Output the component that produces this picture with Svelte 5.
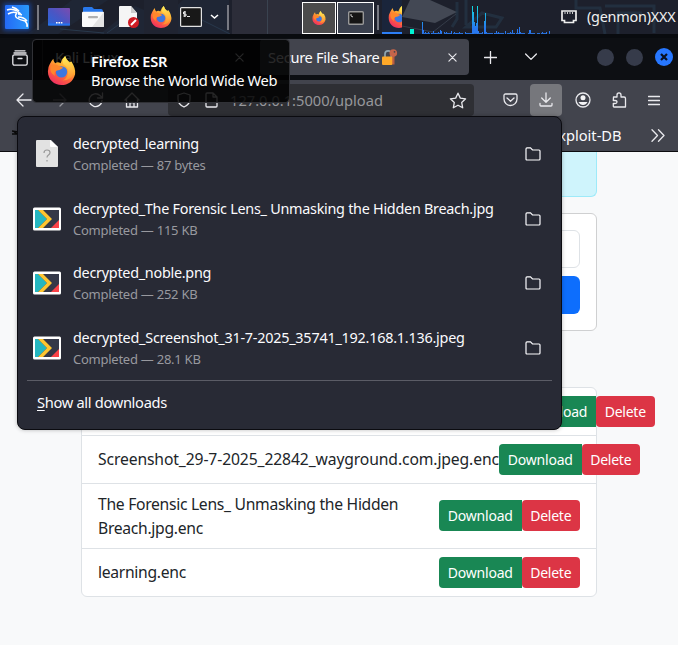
<script>
  const downloads = [
    { name: 'decrypted_learning', size: '87 bytes', kind: 'unknown' },
    { name: 'decrypted_The Forensic Lens_ Unmasking the Hidden Breach.jpg', size: '115 KB', kind: 'image' },
    { name: 'decrypted_noble.png', size: '252 KB', kind: 'image' },
    { name: 'decrypted_Screenshot_31-7-2025_35741_192.168.1.136.jpeg', size: '28.1 KB', kind: 'image' }
  ];
  const files = [
    { name: '', height: 48, cls: 'covered' },
    { name: 'Screenshot_29-7-2025_22842_wayground.com.jpeg.enc', height: 48, cls: 'wide' },
    { name: 'The Forensic Lens_ Unmasking the Hidden Breach.jpg.enc', height: 65, cls: 'wrap' },
    { name: 'learning.enc', height: 47, cls: '' }
  ];
  // CPU graph samples: x offset and bar height
  const bars = [[20,12],[21,4],[23,2],[26,2],[29,1],[31,3],[33,1],[36,2],[38,4],[39,3],[42,2],[44,2],[46,1],[49,3],[52,2],[54,1],[57,2],[60,1],[63,2],[66,1],[70,28],[71,22],[72,12],[73,8],[74,11],[75,28],[76,3],[80,2],[82,13],[83,21],[84,2],[87,1],[92,1],[94,3],[96,2],[99,1],[103,3],[105,1],[108,2],[110,4],[112,1],[115,5],[117,7],[118,2],[121,1],[127,4],[128,4],[131,1],[135,1],[140,2],[144,2],[147,3]];
</script>

{#snippet firefox(size)}
  <svg width={size} height={size} viewBox="0 0 32 32">
    <defs>
      <linearGradient id="fxo" x1=".8" y1=".05" x2=".25" y2="1">
        <stop offset="0" stop-color="#ffe850" /><stop offset=".35" stop-color="#ffac30" />
        <stop offset=".62" stop-color="#ff653b" /><stop offset="1" stop-color="#ee2b65" />
      </linearGradient>
      <linearGradient id="fxy" x1="0" y1="0" x2="0" y2="1">
        <stop offset="0" stop-color="#fff15a" /><stop offset="1" stop-color="#ff8b2e" />
      </linearGradient>
    </defs>
    <path d="M3 9 Q5 5 7 3 Q7 6 9 8 Q12 6 15 8 Q16 3 20 0 Q21 4 25 7 L27 6 Q32 14 31 20 C29 28 23 32 16 32 C8 32 1 26 1 17 Q1 12 3 9Z" fill="url(#fxo)" />
    <circle cx="16" cy="17.500" r="6.300" fill="#3d77df" />
    <path d="M4 11 Q8 8 13 11 L18 13 Q14 16 11 16 Q7 18 9 22 Q2 18 4 11Z" fill="#ff872c" />
    <path d="M20 0 Q16 5 18 9 Q25 13 23 20 Q22 25 17 27 Q28 27 29 18 Q29 12 25 8 Q21 5 20 0Z" fill="url(#fxy)" />
  </svg>
{/snippet}

{#snippet cross()}
  <svg width="9" height="9" viewBox="0 0 10 10" class="line"><path d="M1 1l8 8M9 1l-8 8" /></svg>
{/snippet}

<div class="screen">
  <header class="panel">
    <svg class="wallpaper" width="678" height="34" viewBox="0 0 678 34">
      <path d="M28 34L72 0h36L58 34M100 34L135 6l28 12 20-18h46v34" fill="#222c3d" opacity=".5" />
      <path d="M60 29l44 4M182 10l48 24M107 33L132 15" stroke="#28394c" fill="none" />
      <path d="M402 17l8-17h20l27 12-22 11z" fill="#434854" /><path d="M402 26l31 6 23-18" stroke="#353c49" fill="none" />
      <path d="M457 2v17l-5 8M466 0v25M482 13l20 5-6 9h-30zM576 0v8h24l5 26M605 6h49v27M618 34V13h24" fill="none" stroke="#2b4256" stroke-width="3" opacity=".45" />
    </svg>
    <div class="kali">
      <svg width="24" height="24" viewBox="0 0 24 24" fill="none" stroke="#fff">
        <path d="M2 5Q7 3 12 6M3 9Q8 6 12 8M7 2Q11 3 14 6M12 8Q9 11 12 13T20 16Q23 19 22 22M13 12Q19 12 22 16" stroke-width="1.5" />
        <path d="M12 6Q15 7 17 10Q14 10 13 9" fill="#fff" />
      </svg>
    </div>
    <i class="divider"></i>
    <svg class="desk" width="22" height="18" viewBox="0 0 22 18">
      <defs><linearGradient id="dk" x1="0" y1="1" x2="1" y2="0"><stop stop-color="#2866d8" /><stop offset=".5" stop-color="#4a56c4" /><stop offset="1" stop-color="#7d4bae" /></linearGradient></defs>
      <rect width="22" height="17.500" rx="1" fill="url(#dk)" /><path d="M0 16.500h22" stroke="#2674ee" stroke-width="2" /><path d="M8 14.800h7" stroke="#fff" stroke-width="1.500" stroke-dasharray="1.600 .8" />
    </svg>
    <svg class="folder" width="22" height="20" viewBox="0 0 22 20">
      <path d="M1 1Q1 0 3 0h7l2 2h7q2 0 2 3H1z" fill="#2878ec" /><rect y="4.700" width="22" height="15.300" rx="1" fill="#fafafa" /><path d="M22 5v14q0 1-1 1H10z" fill="#e4e4e4" /><rect x="6" y="9" width="10" height="2.300" rx="1" fill="#b0b0b0" />
    </svg>
    <svg class="doc" width="20" height="22" viewBox="0 0 20 22">
      <path d="M0 1q0-1 1-1h11l6 7v14H0z" fill="#f5f5f5" /><path d="M12 0l6 7h-6z" fill="#ccc" /><circle cx="14.500" cy="16.500" r="5.500" fill="#cf1c24" /><path d="M12 19l5-5" stroke="#fff" stroke-width="2" />
    </svg>
    <div class="fx-launch">{@render firefox(22)}</div>
    <svg class="term" width="22" height="20" viewBox="0 0 22 20">
      <rect x=".6" y=".6" width="20.800" height="18.800" rx="1" fill="#181818" stroke="#e2e2e2" stroke-width="1.200" /><path d="M6 5H3.500v2H6v2H3.300M4.800 4v6M7 9.500h3" fill="none" stroke="#fff" stroke-width=".9" />
    </svg>
    <svg class="caret" width="9" height="6" viewBox="0 0 9 6"><path d="M1 1l3.500 3L8 1" fill="none" stroke="#fff" stroke-width="1.600" /></svg>
    <i class="divider second"></i>
    <div class="workspaces"><i></i><i></i></div>
    <div class="task active">{@render firefox(14)}</div>
    <div class="task">
      <svg width="16" height="14" viewBox="0 0 16 14"><rect x=".7" y=".7" width="14.600" height="12.600" rx="1" fill="#151515" stroke="#999" stroke-width="1.400" /><path d="M3 3v2l2 1" stroke="#ccc" fill="none" /></svg>
    </div>
    <i class="divider third"></i>
    <div class="half">{@render firefox(22)}</div>
    <svg class="graph" width="150" height="34" viewBox="0 0 150 34">
      <defs><linearGradient id="cpu" gradientUnits="userSpaceOnUse" x1="0" y1="34" x2="0" y2="6"><stop offset=".2" stop-color="#2878f0" /><stop offset="1" stop-color="#12dbe0" /></linearGradient></defs>
      <rect x="8" y="29" width="4" height="5" fill="#00f5d4" />
      {#each bars as [x, h]}<rect {x} y={34 - h} width="1" height={h} fill="url(#cpu)" />{/each}
      <path d="M21 33.500h127" stroke="#286fd7" stroke-dasharray="7 2 3 1 5 3" />
    </svg>
    <svg class="net" width="16" height="14" viewBox="0 0 16 14"><path d="M1 1h14v9.500h-2.500V12.500h-9v-2H1z" fill="none" stroke="#eee" stroke-width="1.700" /><path d="M4 2v2M6.500 2v2M9 2v2M11.500 2v2" stroke="#ccc" /></svg>
    <span class="genmon">(genmon)XXX</span>
  </header>

  <div class="tabs">
    <svg class="view line" width="16" height="16" viewBox="0 0 16 16"><path d="M3 .8h10M2 3h12" /><rect x=".8" y="4.800" width="14.400" height="10.400" rx="1.600" /><path d="M6 8.500h4" /></svg>
    <div class="tab idle"><span>Kali Linux</span>{@render cross()}</div>
    <div class="tab current"><span class="title">Secure File Share</span>
      <svg class="lock" width="16" height="17" viewBox="0 0 16 17"><path d="M3 9V5a3.200 3.200 0 0 1 6.400 0v4" fill="none" stroke="#8fa5b0" stroke-width="1.700" /><path d="M10 6h2.500v9.500H10z" fill="#b85c43" /><rect x="0" y="7.500" width="10.300" height="8.500" rx="1" fill="#ffa928" /><circle cx="11.300" cy="4" r="3.800" fill="#c5654a" /><circle cx="12.500" cy="2.800" r=".9" fill="#44464e" /></svg>
      {@render cross()}
    </div>
    <svg class="plus line" width="13" height="13" viewBox="0 0 13 13"><path d="M6.500 .5v12M.5 6.500h12" /></svg>
    <svg class="all line" width="12" height="8" viewBox="0 0 12 8"><path d="M.6 1L6 6.400 11.400 1" /></svg>
    <div class="wm"><i></i><i></i><i class="close"><svg width="8" height="8" viewBox="0 0 8 8"><path d="M1 1l6 6M7 1L1 7" stroke="#0a1020" stroke-width="2.200" /></svg></i></div>
  </div>

  <div class="toolbar">
    <svg class="back line" width="16" height="14" viewBox="0 0 16 14"><path d="M7 1L1 7l6 6M1 7h14" /></svg>
    <svg class="fwd line" width="14" height="14" viewBox="0 0 14 14"><path d="M7 1l6 6-6 6M13 7H0" /></svg>
    <svg class="reload line" width="16" height="16" viewBox="0 0 16 16"><path d="M14 8.500A6.400 6.400 0 1 1 12 3.500l2.500 2.500M14.500 1v5h-5" /></svg>
    <svg class="home line" width="16" height="16" viewBox="0 0 16 16"><path d="M1 8l7-7 7 7M2.500 7v8h11V7M6 15v-4.500h4V15" /></svg>
    <div class="url">
      <svg class="line" width="16" height="16" viewBox="0 0 16 16"><path d="M8 1l6 2v4c0 4-2.500 6.500-6 8-3.500-1.500-6-4-6-8V3z" /></svg>
      <svg class="line page-ic" width="14" height="16" viewBox="0 0 14 16"><path d="M2 1h6l4 4v9q0 1-1 1H2q-1 0-1-1V2q0-1 1-1M8 1v4h4" /></svg>
      <span class="address">127.0.0.1:5000/upload</span>
      <svg class="line star" width="18" height="17" viewBox="0 0 18 17"><path d="M9 1.200l2.300 4.900 5.300.7-3.900 3.700 1 5.300L9 13.200l-4.700 2.600 1-5.300L1.400 6.800l5.300-.7z" /></svg>
    </div>
    <svg class="pocket line" width="15" height="14" viewBox="0 0 15 14"><path d="M2.500 1h10q1.500 0 1.500 1.500V6a6.500 6.500 0 0 1-13 0V2.500Q1 1 2.500 1M4 5l3.500 3.200L11 5" /></svg>
    <div class="dl"><svg class="line" width="14" height="16" viewBox="0 0 14 16"><path d="M7 1v9M2.700 6L7 10.300 11.300 6M1 11.500V13q0 1 1 1h10q1 0 1-1v-1.500" /></svg></div>
    <svg class="account line" width="16" height="16" viewBox="0 0 16 16"><circle cx="8" cy="8" r="7" /><circle cx="8" cy="5.800" r="2.500" fill="#f4f4f6" stroke="none" /><path d="M3.500 10h9Q11 13 8 13t-4.500-3" fill="#f4f4f6" stroke="none" /></svg>
    <svg class="ext line" width="15" height="16" viewBox="0 0 15 16"><path d="M1.500 5H5V3Q5 .8 7 .8T9 3v2h3q1.500 0 1.500 1.500V15H2q-.7 0-.7-1v-2.500H3q2 0 2-1.500T3 8.500H1.300z" /></svg>
    <svg class="menu line" width="12" height="11" viewBox="0 0 12 11"><path d="M.5 1.500h11M.5 5.500h11M.5 9.500h11" /></svg>
  </div>

  <div class="bookmarks">
    <svg class="kali-mark" width="8" height="8" viewBox="0 0 8 8"><path d="M0 2l6 1 2 1M0 5h7M2 3l5 3" stroke="#0a0a0a" stroke-width="1.400" fill="none" /></svg>
    <span>Exploit-DB</span>
    <svg class="line more" width="14" height="13" viewBox="0 0 14 13"><path d="M1 .8l5.500 5.700L1 12.200M7.500 .8L13 6.500l-5.500 5.700" /></svg>
  </div>

  <main>
    <div class="alert"></div>
    <div class="card"><div class="input"></div><div class="submit"></div></div>
    <div class="list">
      {#each files as f}
        <div class="file {f.cls}" style="height:{f.height}px">
          <span class="fname">{f.name}</span>
          <div class="btns"><button class="get">Download</button><button class="del">Delete</button></div>
        </div>
      {/each}
    </div>
  </main>

  <section class="popup">
    {#each downloads as d}
      <div class="item">
        <div class="thumb">
          {#if d.kind === 'unknown'}
            <svg width="22" height="28" viewBox="0 0 22 28"><path d="M0 1q0-1 1-1h14l7 7v19q0 1-1 1H1q-1 0-1-1z" fill="#e2e2e2" /><path d="M14 0l8 7h-7q-1 0-1-1z" fill="#fff" /><path d="M8 13q0-3 3-3t3 2.500q0 1.500-1.500 2.500T11 17.500M11 20v1.500" stroke="#999" stroke-width="1.200" fill="none" /></svg>
          {:else}
            <svg width="28" height="24" viewBox="0 0 28 24"><rect y=".5" width="28" height="23" rx="1.500" fill="#fff" /><rect x="2" y="3" width="24" height="18" fill="#343848" /><path d="M2 3h3l9 9-9 9H2z" fill="#25b7c0" /><path d="M5 3h5l9 9-9 9H5l9-9z" fill="#ffc52f" /><path d="M26 13v8h-8z" fill="#fa4248" /></svg>
          {/if}
        </div>
        <div class="info"><div class="name">{d.name}</div><div class="meta">Completed — {d.size}</div></div>
        <svg class="open" width="16" height="14" viewBox="0 0 16 14"><path d="M1 2q0-1.200 1-1.200h3.500L7.500 3H14q1 0 1 1v8q0 1-1 1H2q-1 0-1-1z" fill="none" stroke="#fbfbfe" stroke-width="1.200" /></svg>
      </div>
    {/each}
    <div class="all-dl"><u>S</u>how all downloads</div>
  </section>

  <aside class="tooltip">
    {@render firefox(29)}
    <div class="tip"><b>Firefox ESR</b><span>Browse the World Wide Web</span></div>
  </aside>
</div>

<style>
  :global(body) { margin: 0; overflow: hidden; }
  .screen { position: relative; width: 678px; height: 645px; overflow: hidden; background: #f8f9fa; font-family: "Noto Sans", sans-serif; font-size: 14.667px; color: #fbfbfe; }
  .screen *, .screen { box-sizing: border-box; }
  svg { display: block; flex: none; }
  .line { fill: none; stroke: #e9e9ed; stroke-width: 1.3; stroke-linecap: round; stroke-linejoin: round; }

  .panel { position: relative; display: flex; align-items: flex-start; height: 38px; background: linear-gradient(#1d202c 0 34px, #090b0f 34px); }
  .panel > * { flex: none; position: relative; }
  .panel .wallpaper { position: absolute; left: 0; top: 0; }
  .kali { margin: 5px 0 0 5px; width: 24px; height: 24px; background: linear-gradient(90deg, #2469f5, #2999fb); box-shadow: 0 0 4px 2px #173f8c; border-radius: 1px; }
  .divider { width: 2px; height: 25px; margin: 5px 0 0 8px; background: #777982; }
  .desk { margin: 8px 0 0 9px; }
  .folder { margin: 7px 0 0 12px; }
  .doc { margin: 6px 0 0 15px; }
  .fx-launch { width: 34px; height: 34px; margin-left: 5px; padding: 6px 0 0 6px; background: #202431; }
  .term { margin: 7px 0 0 2px; }
  .caret { margin: 14px 0 0 8px; }
  .second { margin-left: 8px; }
  .workspaces { display: flex; gap: 1px; margin-left: 3px; width: 70px; height: 34px; background: #3a4350; }
  .workspaces i { flex: 1; background: #2c2d39; }
  .task { display: flex; align-items: center; justify-content: center; width: 37px; height: 32px; margin-top: 2px; border: 1px solid #fff; background: #3a404e; }
  .task.active { width: 34px; background: #4b4b4c; margin-right: 1px; }
  .third { margin-left: 3px; }
  .half { margin-left: 3px; width: 20px; height: 34px; padding: 6px 0 0 6px; overflow: hidden; background: #1a253b; border-bottom: 2px solid #2c7ef5; }
  .net { margin: 10px 0 0 9px; }
  .genmon { margin: 7px 0 0 10px; line-height: 20px; font-size: 14.4px; letter-spacing: -.22px; white-space: nowrap; color: #f0f0f0; }

  .tabs { display: flex; height: 42px; background: #0d0f13; align-items: flex-start; }
  .view { margin: 12px 0 0 12px; }
  .tab { display: flex; align-items: center; height: 36px; margin-top: 1px; border-radius: 4px; white-space: nowrap; }
  .idle { width: 213px; margin-left: 14px; padding: 0 11px 0 12px; justify-content: space-between; border-left: 1px solid #33343a; border-radius: 0; }
  .idle span { letter-spacing: -.3px; }
  .current { width: 209px; margin-left: 5px; padding: 0 12px 0 8px; background: #42444d; }
  .title { width: 111px; letter-spacing: -.32px; }
  .lock { margin: 0 auto 0 3px; }
  .plus { margin: 13px 0 0 15px; }
  .all { margin: 15px 0 0 28px; }
  .wm { display: flex; gap: 12px; margin: 11px 0 0 60px; }
  .wm i { width: 17px; height: 17px; border-radius: 50%; background: #363b4a; }
  .wm i.close { display: flex; align-items: center; justify-content: center; width: 18px; height: 18px; margin-top: -1px; background: #2777ff; }

  .toolbar { display: flex; align-items: center; height: 40px; background: #42444d; }
  .back { margin-left: 16px; }
  .fwd { margin-left: 21px; opacity: .5; }
  .reload { margin-left: 21px; }
  .home { margin-left: 20px; }
  .url { display: flex; align-items: center; width: 306px; height: 32px; margin-left: 28px; padding: 0 7px 0 8px; border-radius: 4px; background: #2e2f34; }
  .page-ic { margin-left: 13px; }
  .address { margin-left: 11px; color: #96979b; }
  .star { margin-left: auto; }
  .pocket { margin-left: 28.500px; }
  .dl { display: flex; align-items: center; justify-content: center; width: 32px; height: 32px; margin-left: 12.500px; border-radius: 4px; background: #76777c; }
  .account { margin-left: 12.500px; }
  .ext { margin-left: 21px; }
  .menu { margin-left: 21.500px; }

  .bookmarks { display: flex; align-items: center; height: 32px; background: #42444d; border-bottom: 1px solid #0c0c0f; }
  .kali-mark { margin: -6px 0 0 12px; }
  .bookmarks span { width: 81px; margin: -1px 0 0 530px; line-height: 20px; white-space: nowrap; }
  .more { margin-left: 20px; }

  main { width: 516px; margin-left: 81px; font-size: 16px; color: #212529; }
  .alert { height: 45px; border: 1px solid #9eeaf9; border-top: 0; border-radius: 0 0 6px 6px; background: #cff4fc; }
  .card { height: 118px; margin-top: 16px; padding: 16px; border: 1px solid #cfd0d1; border-radius: 6px; background: #fff; }
  .input { height: 38px; border: 1px solid #dee2e6; border-radius: 6px; }
  .submit { height: 38px; margin-top: 8px; border-radius: 6px; background: #0d6efd; }
  .list { height: 210px; margin-top: 56px; border: 1px solid #dee2e6; border-radius: 6px; background: #fff; }
  .file { display: flex; align-items: center; justify-content: space-between; padding: 0 16px; border-bottom: 1px solid #dee2e6; }
  .file:last-child { border: 0; }
  .fname { line-height: 24px; flex: none; font-size: 15.7px; letter-spacing: -.3px; margin-top: -1px; }
  .covered .fname { width: 415.5px; }
  .wide .fname { white-space: nowrap; width: 401px; letter-spacing: -.12px; }
  .wrap .fname { width: 330px; margin-top: 0; }
  .wrap .btns { margin-top: -1px; }
  .btns { display: flex; flex: none; }
  button { height: 31px; padding: 0 0 1px; border: 0; color: #fff; font: 14px/21px "Noto Sans", sans-serif; letter-spacing: -.23px; }
  .get { width: 82.500px; background: #198754; border-radius: 4px 0 0 4px; }
  .del { width: 58.500px; background: #dc3545; border-radius: 4px; }

  .popup { position: absolute; left: 17px; top: 116px; width: 545px; height: 314px; padding: 5px 9px; border: 1px solid #0b0b10; border-radius: 8px; background: #282a35; box-shadow: 0 0 4px #0004; }
  .item { display: flex; align-items: flex-start; height: 64.6px; }
  .thumb { width: 28px; height: 54px; margin: 5px 0 0 6px; display: flex; align-items: center; justify-content: center; }
  .info { width: 430px; margin: 12px 0 0 12px; white-space: nowrap; }
  .name { line-height: 20px; font-size: 14.4px; letter-spacing: -.27px; }
  .item:nth-child(4) .name { letter-spacing: -.23px; }
  .meta { margin-top: 1px; font-size: 13px; line-height: 20px; letter-spacing: -.25px; color: #98999f; }
  .open { margin: 25px 0 0 21.500px; }
  .all-dl { border-top: 1px solid #5b5c66; padding: 11px 0 0 10px; line-height: 20px; letter-spacing: -.32px; }
  u { text-underline-offset: 2px; }

  .tooltip { position: absolute; left: 32px; top: 39px; width: 258px; height: 64px; display: flex; align-items: center; padding: 0 0 2px 14px; border: 1px solid #303136; border-radius: 4px; background: rgba(0, 0, 0, .84) padding-box; }
  .tip { display: flex; flex-direction: column; margin: 1px 0 0 15px; line-height: 19px; white-space: nowrap; color: #fff; letter-spacing: -.35px; }
  .tip b { font-weight: 600; letter-spacing: -.2px; }
</style>
